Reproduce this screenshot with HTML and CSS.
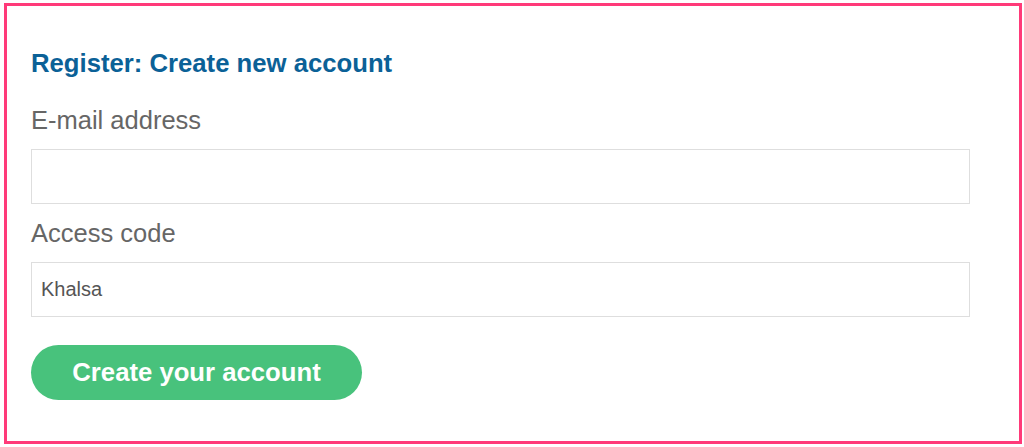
FILE: index.html
```html
<!DOCTYPE html>
<html lang="en">
<head>
<meta charset="utf-8">
<title>Register</title>
<link rel="stylesheet" href="styles.css">
</head>
<body>
<div class="frame">
  <form class="register">
    <h2 class="title">Register: Create new account</h2>
    <label class="label" for="email">E-mail address</label>
    <input class="field" id="email" type="email">
    <label class="label" for="code">Access code</label>
    <input class="field" id="code" type="text" value="Khalsa">
    <button class="submit" type="button">Create your account</button>
  </form>
</div>
</body>
</html>
```
FILE: styles.css
```css
html, body {
  margin: 0;
  padding: 0;
  background: #ffffff;
}
body {
  font-family: "Liberation Sans", Arial, Helvetica, sans-serif;
}
.frame {
  box-sizing: border-box;
  width: 1018px;
  height: 441px;
  margin: 3px 0 0 4px;
  border: 3px solid #ff3a79;
  background: #fff;
}
.register {
  display: flex;
  flex-direction: column;
  align-items: flex-start;
  padding: 42px 0 0 24px;
}
.title {
  margin: 0;
  font-size: 25.7px;
  line-height: 30px;
  font-weight: bold;
  color: #0b6197;
}
.label {
  display: block;
  margin-top: 27px;
  font-size: 25.5px;
  line-height: 30px;
  color: #666666;
}
.label + .field {
  margin-top: 14px;
}
.field + .label {
  margin-top: 14px;
}
.field {
  box-sizing: border-box;
  width: 939px;
  height: 55px;
  margin: 0;
  padding: 0 9px;
  border: 1px solid #dedede;
  border-radius: 0;
  background: #fff;
  font-family: "Liberation Sans", Arial, Helvetica, sans-serif;
  font-size: 20px;
  color: #555555;
  outline: none;
}
.submit {
  box-sizing: border-box;
  width: 331px;
  height: 55px;
  margin-top: 28px;
  padding: 0;
  border: none;
  border-radius: 28px;
  background: #48c27c;
  color: #ffffff;
  font-family: "Liberation Sans", Arial, Helvetica, sans-serif;
  font-size: 25.7px;
  font-weight: bold;
  cursor: pointer;
}
```
